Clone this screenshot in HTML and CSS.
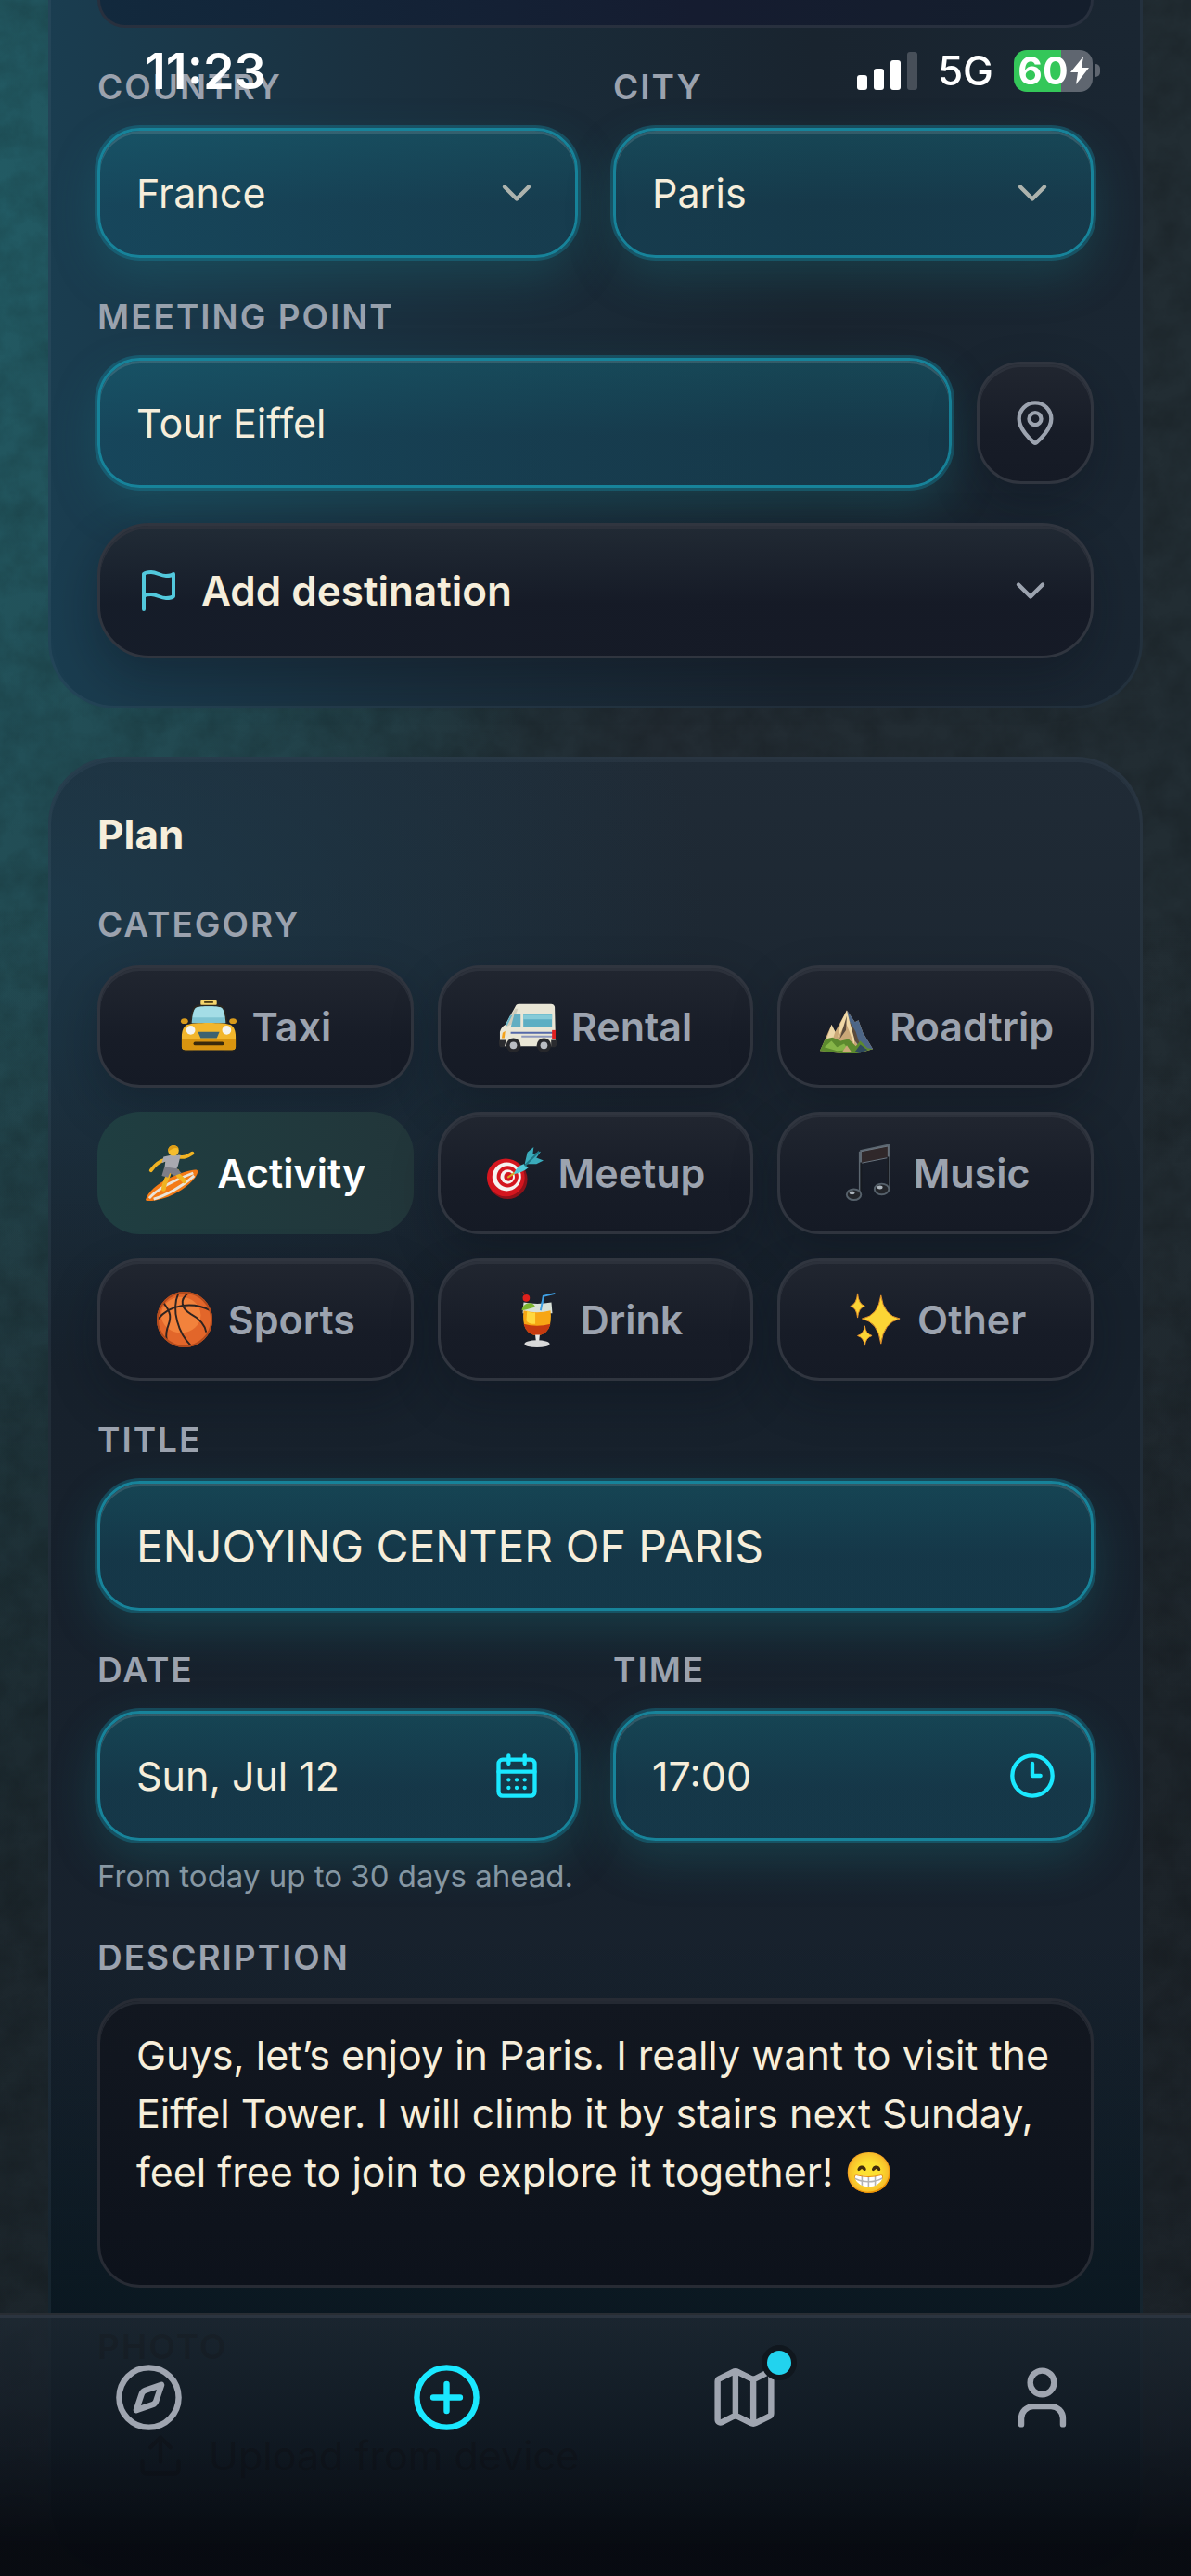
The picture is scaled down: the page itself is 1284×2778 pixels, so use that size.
FILE: index.html
```html
<!DOCTYPE html>
<html lang="en">

<head>
  <meta charset="UTF-8">
  <meta name="viewport" content="width=device-width, initial-scale=1.0">
  <title>New plan</title>
  <link rel="stylesheet" href="styles.css">
</head>
<body>
  <svg class="texture" aria-hidden="true">
    <filter id="grain">
      <feTurbulence type="fractalNoise" baseFrequency="0.03" numOctaves="5" seed="8"></feTurbulence>
      <feColorMatrix values="0 0 0 0 0  0 0 0 0 0  0 0 0 0 0  1.6 0 0 0 -0.5"></feColorMatrix>
    </filter>
    <rect width="100%" height="100%" filter="url(#grain)"></rect>
  </svg>

  <div class="status-bar">
    <span class="status-time">11:23</span>
    <div class="status-icons">
      <svg class="signal" viewBox="0 0 65 41" aria-hidden="true">
        <rect x="0" y="25" width="11" height="16" rx="3" fill="#fff"></rect>
        <rect x="18" y="18" width="11" height="23" rx="3" fill="#fff"></rect>
        <rect x="36" y="9" width="11" height="32" rx="3" fill="#fff"></rect>
        <rect x="54" y="0" width="11" height="41" rx="3" fill="#474f59"></rect>
      </svg>
      <span class="network">5G</span>
      <div class="battery">
        <span>60</span>
        <svg class="bolt" viewBox="0 0 20 30" aria-hidden="true"><path d="M14 0 0 17h8L6 30 20 12h-8z" fill="#fff"></path></svg>
      </div>
      <span class="battery-cap"></span>
    </div>
  </div>

  <main class="page">
    <section class="card card-location">
      <div class="cut-field"></div>
      <div class="form-row">
        <div class="form-group">
          <label for="country">Country</label>
          <div class="control">
            <select id="country" class="field filled"><option>France</option></select>
            <svg class="icon icon-muted" viewBox="0 0 24 24"><path d="m6 9 6 6 6-6"></path></svg>
          </div>
        </div>
        <div class="form-group">
          <label for="city">City</label>
          <div class="control">
            <select id="city" class="field filled"><option>Paris</option></select>
            <svg class="icon icon-muted" viewBox="0 0 24 24"><path d="m6 9 6 6 6-6"></path></svg>
          </div>
        </div>
      </div>
      <div class="form-group">
        <label for="meeting">Meeting point</label>
        <div class="meeting-row">
          <input type="text" id="meeting" class="field filled" value="Tour Eiffel">
          <button type="button" class="pin-btn" aria-label="Pick on map">
            <svg viewBox="0 0 24 24"><path d="M20 10c0 5-5.500 10.200-7.400 11.800a1 1 0 0 1-1.200 0C9.500 20.200 4 15 4 10a8 8 0 0 1 16 0"></path><circle cx="12" cy="10" r="3"></circle></svg>
          </button>
        </div>
      </div>
      <button type="button" class="wide-btn">
        <svg class="flag" viewBox="0 0 24 24"><path d="M4 15s1-1 4-1 5 2 8 2 4-1 4-1V3s-1 1-4 1-5-2-8-2-4 1-4 1zM4 22v-7"></path></svg>
        <span>Add destination</span>
        <svg class="chevron" viewBox="0 0 24 24"><path d="m6 9 6 6 6-6"></path></svg>
      </button>
    </section>

    <section class="card card-plan">
      <h2>Plan</h2>
      <div class="form-group">
        <span class="label" id="category-label">Category</span>
        <div class="chips" role="group" aria-labelledby="category-label">
          <button type="button" class="chip">
            <svg viewBox="0 0 64 64" aria-hidden="true">
              <rect x="3" y="52" width="12" height="9" rx="3" fill="#1d1f22"></rect>
              <rect x="49" y="52" width="12" height="9" rx="3" fill="#1d1f22"></rect>
              <path d="M11 30c1-12 2-18 6-21 6-3 24-3 30 0 4 3 5 9 6 21z" fill="#2b2620"></path>
              <path d="M13 28c1-10 2-15 5-17 5-2 23-2 28 0 3 2 4 7 5 17z" fill="#7fc4d2"></path>
              <path d="M14 22c1-6 2-10 4-11 5-2 23-2 28 0 2 1 3 5 4 11z" fill="#a4dde6"></path>
              <rect x="23" y="2" width="18" height="6" rx="1" fill="#f4d36b"></rect>
              <path d="M27 5h10" stroke="#4b3a12" stroke-width="2"></path>
              <ellipse cx="5" cy="26" rx="4" ry="3" fill="#d89a1c"></ellipse>
              <ellipse cx="59" cy="26" rx="4" ry="3" fill="#d89a1c"></ellipse>
              <path d="M8 30c6-3 42-3 48 0 4 2 6 7 6 13v11c0 3-1 4-4 4H6c-3 0-4-1-4-4V43c0-6 2-11 6-13z" fill="#f2b62c"></path>
              <path d="M2 46h60v8c0 3-1 4-4 4H6c-3 0-4-1-4-4z" fill="#d9940f"></path>
              <circle cx="12" cy="36" r="5" fill="#f4f4f0"></circle>
              <circle cx="52" cy="36" r="5" fill="#f4f4f0"></circle>
              <path d="M20 38h24l-3 7H23z" fill="#3d6270"></path>
              <rect x="15" y="49" width="34" height="4" rx="2" fill="#3a2a0c"></rect>
            </svg>
            Taxi
          </button>
          <button type="button" class="chip">
            <svg viewBox="0 0 64 64" aria-hidden="true">
              <path d="M18 10q1-3 4-3h36q3 0 4 3l1 40q0 4-4 4H4q-3 0-3-4V38q1-5 6-8z" fill="#e9e6d6"></path>
              <path d="M18 12 7 30l2 2 6-3 6-17z" fill="#cfccbb"></path>
              <path d="M12 20 7 31h2l6-12z" fill="#69b5c8"></path>
              <path d="M17 18h7v15H13z" fill="#62aec2"></path>
              <rect x="27" y="18" width="32" height="15" rx="1" fill="#5caec3"></rect>
              <path d="M27 19h32v5H27z" fill="#86cbd8"></path>
              <path d="M13 38h48v2H13z" fill="#5468a8"></path>
              <path d="M25 42h35v2H25z" fill="#8d97bd"></path>
              <rect x="59" y="36" width="4" height="10" fill="#e01f1f"></rect>
              <path d="m4 39 3-2-1 8H3z" fill="#f3a21b"></path>
              <path d="M0 47h8l-2 8H3q-3 0-3-4zM58 47h6v5q0 3-4 3h-2z" fill="#2a2b2f"></path>
              <circle cx="16" cy="53" r="8" fill="#26272b"></circle>
              <circle cx="16" cy="53" r="4" fill="#b9bcc2"></circle>
              <circle cx="50" cy="53" r="8" fill="#26272b"></circle>
              <circle cx="50" cy="53" r="4" fill="#b9bcc2"></circle>
            </svg>
            Rental
          </button>
          <button type="button" class="chip">
            <svg viewBox="0 0 64 64" aria-hidden="true">
              <path d="m3 59 13-29 4 8L33 14l9 13 4-2 5 14 11 18-17 5H27z" fill="#caa878"></path>
              <path d="m33 14 9 13 4-2 5 14 11 18-13 1-9-13-5-15z" fill="#4d6687"></path>
              <path d="m33 14 3 12 6 14-1 12-5-14-4-10-9 16 3-16z" fill="#f1d9a6"></path>
              <path d="m16 30-7 20 9-6 2-6z" fill="#ecd6a9"></path>
              <path d="M33 20 25 46l7-10zM36 26l6 22 6 6-5-16z" fill="#5b4b3c"></path>
              <path d="m3 59 6-13 8-2 9 4 9-2 8 8 5-6 8 8 6 1-17 5H27z" fill="#5c8a2e"></path>
              <path d="m8 55 8-7 6 7 8-4 5 7-13 1zM44 58l5-4 6 3z" fill="#86b548"></path>
              <path d="m28 60 5-7 5 7z" fill="#c9a878"></path>
              <path d="m42 60 6-8 8 6-9 4z" fill="#2f4a5c"></path>
            </svg>
            Roadtrip
          </button>
          <button type="button" class="chip selected" aria-pressed="true">
            <svg viewBox="0 0 64 64" aria-hidden="true">
              <path d="M1 62C4 50 22 38 44 31c10-3 16-4 15 0-2 10-22 25-38 29-10 3-19 4-20 2z" fill="#f47a16"></path>
              <path d="M5 60c8-9 25-19 49-28M10 61c13-4 32-14 45-26" fill="none" stroke="#e9e4d9" stroke-width="3"></path>
              <path d="M27 32c-2 8-6 10-6 18M36 30c-1 5 4 6 8 11" fill="none" stroke="#f0b323" stroke-width="5" stroke-linecap="round"></path>
              <path d="M24 17c-8 2-12 5-17 12M38 14c6 1 9 0 15-4" fill="none" stroke="#f0b323" stroke-width="4" stroke-linecap="round"></path>
              <path d="m21 14 8-2h11l-3 12-2 4-13-1 1-8-4 2z" fill="#a9a9b0"></path>
              <path d="m22 25 14 2 5 5-8 3-5-3-2 5-7-2z" fill="#7d7e87"></path>
              <circle cx="32" cy="7" r="6" fill="#f5bd2d"></circle>
              <path d="M26 8c-1-7 9-10 12-3-4-2-7 0-12 3z" fill="#dd9c16"></path>
            </svg>
            Activity
          </button>
          <button type="button" class="chip">
            <svg viewBox="0 0 64 64" aria-hidden="true">
              <circle cx="24" cy="39" r="22" fill="#8f1119"></circle>
              <circle cx="22" cy="37" r="21" fill="#d4161f"></circle>
              <circle cx="23" cy="36" r="16" fill="#f6f3f1"></circle>
              <circle cx="24" cy="36" r="12" fill="#d4161f"></circle>
              <circle cx="24" cy="36" r="8" fill="#f6f3f1"></circle>
              <circle cx="25" cy="36" r="5" fill="#d4161f"></circle>
              <path d="m24 37 12-8" stroke="#d8a91f" stroke-width="2"></path>
              <path d="M31 33q3-9 11-11l5 4q-7 6-16 7z" fill="#52c9d8"></path>
              <path d="M43 22 46 9l7-6-1 8 9-3-5 7 8 3-8 4H46z" fill="#3aabbb"></path>
              <path d="M43 24 59 8" stroke="#1f7887" stroke-width="2"></path>
            </svg>
            Meetup
          </button>
          <button type="button" class="chip">
            <svg viewBox="0 0 64 64" aria-hidden="true">
              <path d="M21 8 53 1v50M21 8v48" fill="none" stroke="#5b6670" stroke-width="3" stroke-linejoin="round"></path>
              <path d="m22 8 30-6v13l-30 6z" fill="#30282a" stroke="#6b7680" stroke-width="1"></path>
              <path d="M22 20v35M52 14v36" stroke="#171a20" stroke-width="2"></path>
              <ellipse cx="14" cy="56" rx="8" ry="6" fill="#23252a" stroke="#56616b" stroke-width="2"></ellipse>
              <ellipse cx="45" cy="50" rx="8" ry="6" fill="#23252a" stroke="#56616b" stroke-width="2"></ellipse>
              <ellipse cx="12" cy="54" rx="3" ry="2" fill="#aeb6be"></ellipse>
              <ellipse cx="43" cy="48" rx="3" ry="2" fill="#aeb6be"></ellipse>
            </svg>
            Music
          </button>
          <button type="button" class="chip">
            <svg viewBox="0 0 64 64" aria-hidden="true">
              <circle cx="32" cy="32" r="31" fill="#e2662a"></circle>
              <ellipse cx="28" cy="27" rx="22" ry="20" fill="#f2823c"></ellipse>
              <g fill="none" stroke="#2e2320" stroke-width="2">
                <path d="M2 32c14-18 40-20 59-10M25 3c-8 19 0 44 14 58M37 2c-12 8-8 18 2 24 10 5 16 13 17 20M9 14c8 10 8 16 5 24-3 8-3 11-2 16"></path>
                <circle cx="32" cy="32" r="30" stroke="#b24a1c"></circle>
              </g>
            </svg>
            Sports
          </button>
          <button type="button" class="chip">
            <svg viewBox="0 0 64 64" aria-hidden="true">
              <path d="M36 24 39 6l13-3" fill="none" stroke="#3fa0e4" stroke-width="2"></path>
              <path d="M17 13q15 3 31 0l1 12H16z" fill="#d8e0d8"></path>
              <path d="M36 22 38 12" stroke="#3fa0e4" stroke-width="2"></path>
              <path d="M17 22q15 4 30 0 3 26-15 28Q14 48 17 22z" fill="#f7a614"></path>
              <path d="M17 37q15 4 30 0-3 12-15 13-12-1-15-13z" fill="#c63a10"></path>
              <path d="M21 22q3 3 9 2v13q-8 0-10-4z" fill="#ffd83e"></path>
              <path d="M15 22c0-8 12-12 15-4l-10 3z" fill="#7cb52e"></path>
              <circle cx="20" cy="8" r="4" fill="#e0201c"></circle>
              <path d="m19 5-3-4" stroke="#8c2a1b" stroke-width="1"></path>
              <path d="M30 49h5l-1 9h-3z" fill="#e6e6e6"></path>
              <ellipse cx="32" cy="59" rx="14" ry="4" fill="#d9d9d9"></ellipse>
            </svg>
            Drink
          </button>
          <button type="button" class="chip">
            <svg viewBox="0 0 64 64" aria-hidden="true">
              <g fill="#fcd535" stroke="#e8932a" stroke-width="1">
                <path d="M40 5q3 23 21 26-18 4-21 28-3-24-21-28 18-3 21-26z"></path>
                <path d="M14 3q1 12 8 14-7 2-8 13-1-11-8-13 7-2 8-14z"></path>
                <path d="M22 39q1 9 8 11-7 2-8 11-1-9-8-11 7-2 8-11z"></path>
              </g>
            </svg>
            Other
          </button>
        </div>
      </div>

      <div class="form-group">
        <label for="title">Title</label>
        <input type="text" id="title" class="field filled title-field" value="ENJOYING CENTER OF PARIS">
      </div>

      <div class="date-block">
        <div class="form-row">
          <div class="form-group">
            <label for="date">Date</label>
            <div class="control">
              <input type="text" id="date" class="field filled" value="Sun, Jul 12">
              <svg class="icon icon-bright" viewBox="0 0 24 24">
                <rect x="3" y="4" width="18" height="18" rx="2"></rect>
                <path d="M8 2v4M16 2v4M3 10h18M8 14h.01M12 14h.01M16 14h.01M8 18h.01M12 18h.01M16 18h.01"></path>
              </svg>
            </div>
          </div>
          <div class="form-group">
            <label for="time">Time</label>
            <div class="control">
              <input type="text" id="time" class="field filled" value="17:00">
              <svg class="icon icon-bright" viewBox="0 0 24 24"><circle cx="12" cy="12" r="10"></circle><path d="M12 6v6h4"></path></svg>
            </div>
          </div>
        </div>
        <p class="hint">From today up to 30 days ahead.</p>
      </div>

      <div class="form-group">
        <label for="description">Description</label>
        <textarea id="description" class="field">Guys, let’s enjoy in Paris. I really want to visit the Eiffel Tower. I will climb it by stairs next Sunday, feel free to join to explore it together! 😁</textarea>
      </div>

      <div class="form-group photo">
        <span class="label">Photo</span>
        <button type="button" class="upload-btn">
          <svg viewBox="0 0 24 24"><path d="M12 15V3M7 8l5-5 5 5M3 15v4a2 2 0 0 0 2 2h14a2 2 0 0 0 2-2v-4"></path></svg>
          Upload from device
        </button>
      </div>
    </section>
  </main>

  <nav class="tab-bar">
    <a href="#explore" aria-label="Explore">
      <svg viewBox="0 0 24 24"><circle cx="12" cy="12" r="10"></circle><path d="m16.240 7.760-1.804 5.411a2 2 0 0 1-1.265 1.265L7.760 16.240l1.804-5.411a2 2 0 0 1 1.265-1.265z"></path></svg>
    </a>
    <a href="#create" class="active" aria-label="Create">
      <svg viewBox="0 0 24 24"><circle cx="12" cy="12" r="10"></circle><path d="M7.500 12h9M12 7.500v9"></path></svg>
    </a>
    <a href="#trips" aria-label="Trips">
      <svg viewBox="0 0 24 24"><path d="M14.106 5.553a2 2 0 0 0 1.788 0l3.659-1.830A1 1 0 0 1 21 4.619v12.764a1 1 0 0 1-.553.894l-4.553 2.277a2 2 0 0 1-1.788 0l-4.212-2.106a2 2 0 0 0-1.788 0l-3.659 1.830A1 1 0 0 1 3 19.381V6.618a1 1 0 0 1 .553-.894l4.553-2.277a2 2 0 0 1 1.788 0zM15 5.764v15M9 3.236v15"></path></svg>
      <span class="dot"></span>
    </a>
    <a href="#profile" aria-label="Profile">
      <svg viewBox="0 0 24 24"><path d="M19 21v-2a4 4 0 0 0-4-4H9a4 4 0 0 0-4 4v2"></path><circle cx="12" cy="7" r="4"></circle></svg>
    </a>
  </nav>
</body>

</html>
```
FILE: styles.css
```css
* {
  box-sizing: border-box;
}

body {
  margin: 0;
  font-family: Inter, "Noto Sans", sans-serif;
  font-size: 43px;
  color: #f6eedb;
  background: linear-gradient(180deg, rgba(0, 10, 14, 0) 50%, rgba(0, 10, 14, 0.5) 92%),
    linear-gradient(90deg, #22454c 0%, #222b32 55%, #222d33 100%);
  background-color: #1f2a30;
}

.texture {
  position: absolute;
  top: 0;
  left: 0;
  z-index: -1;
  width: 100%;
  height: 100%;
  background: radial-gradient(ellipse 50% 42% at 0% 8%, rgba(34, 100, 110, 0.7), rgba(34, 100, 110, 0)),
    linear-gradient(180deg, rgba(30, 36, 42, 0) 35%, rgba(30, 36, 42, 0.8) 75%);
}

.texture rect {
  opacity: 0.16;
}

button,
input,
select,
textarea {
  font-family: inherit;
  font-size: inherit;
  color: inherit;
  margin: 0;
}

svg {
  display: block;
  flex: none;
}

/* status bar */
.status-bar {
  position: fixed;
  top: 0;
  left: 0;
  right: 0;
  z-index: 20;
  display: flex;
  justify-content: space-between;
  padding: 46px 98px 0 156px;
  color: #fff;
}

.status-time {
  font-size: 54px;
  font-weight: 600;
  line-height: 62px;
}

.status-icons {
  display: flex;
  align-items: center;
  height: 60px;
}

.signal {
  width: 65px;
  height: 41px;
}

.network {
  margin: 0 22px 0 22px;
  font-size: 44px;
  font-weight: 500;
}

.battery {
  display: flex;
  align-items: center;
  justify-content: center;
  gap: 2px;
  width: 85px;
  height: 45px;
  border-radius: 14px;
  font-size: 41px;
  font-weight: 700;
  background: linear-gradient(90deg, #34c759 60%, #5f6670 60%);
}

.bolt {
  width: 20px;
  height: 30px;
}

.battery-cap {
  width: 5px;
  height: 14px;
  margin-left: 3px;
  border-radius: 0 6px 6px 0;
  background: #5f6670;
}

/* cards */
.page {
  display: flex;
  flex-direction: column;
  gap: 52px;
  padding: 0 52px;
}

.card {
  display: flex;
  flex-direction: column;
  gap: 38px;
  padding: 48px 50px 51px;
  border: 3px solid rgba(110, 130, 150, 0.12);
  border-radius: 72px;
  background-origin: border-box;
}

.card-location {
  padding-top: 0;
  border-top: 0;
  border-radius: 0 0 72px 72px;
  background-image: linear-gradient(90deg, #1a3d50 0%, #1a2d3b 38%, #19242f 70%, #1a2632 100%);
}

.card-plan {
  background-image: linear-gradient(180deg, rgba(5, 20, 28, 0) 65%, rgba(5, 20, 28, 0.8) 88%),
    radial-gradient(ellipse 60% 26% at 0% 8%, rgba(28, 66, 86, 0.6), rgba(28, 66, 86, 0)),
    linear-gradient(180deg, #202b36 0%, #17212c 30%, #18222e 100%);
  box-shadow: inset 0 3px 0 rgba(110, 130, 150, 0.1);
}

.cut-field {
  height: 30px;
  border: 3px solid #28303e;
  border-top: 0;
  border-radius: 0 0 48px 48px;
  background: linear-gradient(90deg, #12293d, #151c30 60%, #141e2c);
}

h2 {
  margin: 0;
  font-size: 44px;
  font-weight: 700;
  line-height: 66px;
}

.form-row {
  display: grid;
  grid-template-columns: 1fr 1fr;
  gap: 38px;
}

.form-group {
  display: flex;
  flex-direction: column;
  gap: 18px;
  min-width: 0;
}

label,
.label {
  font-size: 37px;
  font-weight: 600;
  line-height: 52px;
  letter-spacing: 2px;
  text-transform: uppercase;
  color: #9ba2ae;
}

.control {
  position: relative;
}

.field {
  display: block;
  width: 100%;
  height: 140px;
  padding: 0 39px;
  border: 3px solid #272b34;
  border-radius: 46px;
  outline: none;
  appearance: none;
}

.filled {
  border-color: #17839a;
  background: linear-gradient(180deg, rgba(20, 110, 130, 0.46), rgba(18, 85, 110, 0.42) 60%);
  background-clip: padding-box;
  box-shadow: 0 0 0 3px rgba(23, 131, 154, 0.4), inset 0 3px 0 rgba(255, 255, 255, 0.12),
    0 20px 50px rgba(24, 130, 140, 0.28);
}

.title-field {
  font-size: 48px;
}

/* icon laid over the right end of a field */
.icon {
  position: absolute;
  top: 44px;
  right: 40px;
  width: 52px;
  height: 52px;
  pointer-events: none;
}

.icon,
.pin-btn svg,
.wide-btn svg,
.upload-btn svg,
.tab-bar svg {
  fill: none;
  stroke: currentColor;
  stroke-width: 2;
  stroke-linecap: round;
  stroke-linejoin: round;
}

.icon-muted {
  color: #adb3ad;
}

.icon-bright {
  color: #1ae8ff;
}

.meeting-row {
  display: flex;
  align-items: center;
  gap: 27px;
}

.meeting-row .field {
  flex: 1;
  min-width: 0;
}

.pin-btn,
.wide-btn,
.chip {
  display: flex;
  align-items: center;
  border: 3px solid #30353f;
  background: linear-gradient(180deg, #212630 0%, #171c27 60%, #151a25 100%);
  box-shadow: inset 0 3px 0 #2c313b, 0 20px 50px rgba(10, 14, 22, 0.3);
}

.pin-btn {
  flex: none;
  justify-content: center;
  width: 126px;
  height: 132px;
  border-radius: 48px;
  color: #9ca3af;
}

.pin-btn svg {
  width: 52px;
  height: 52px;
}

.wide-btn {
  gap: 22px;
  width: 100%;
  height: 146px;
  padding: 0 39px;
  border-radius: 56px;
  font-size: 44px;
  font-weight: 600;
  background: linear-gradient(180deg, rgba(34, 42, 52, 0.9), rgba(21, 25, 37, 0.9) 60%);
}

.wide-btn span {
  flex: 1;
  text-align: left;
}

.wide-btn .flag {
  width: 48px;
  height: 48px;
  color: #52c8dc;
}

.wide-btn .chevron {
  width: 52px;
  height: 52px;
  color: #9ca3af;
}

.chips {
  display: grid;
  grid-template-columns: repeat(3, 1fr);
  gap: 26px;
}

.chip {
  justify-content: center;
  gap: 16px;
  height: 132px;
  padding: 0 12px;
  border-radius: 46px;
  font-weight: 600;
  color: #9ca3af;
}

.chip svg {
  width: 62px;
  height: 62px;
}

.chip.selected {
  border-color: transparent;
  color: #fff;
  background: linear-gradient(90deg, #1f3e41, #22363a);
  background-clip: border-box;
  background-origin: border-box;
  box-shadow: none;
}

.date-block {
  display: flex;
  flex-direction: column;
  gap: 14px;
}

.hint {
  margin: 0;
  font-size: 33px;
  line-height: 48px;
  color: #8d99a5;
}

textarea.field {
  height: 312px;
  padding: 27px 39px;
  line-height: 63px;
  resize: none;
  background: linear-gradient(180deg, #121720, #0d121b);
  box-shadow: inset 0 3px 0 #242932;
}

/* upload area, mostly hidden behind the tab bar */
.photo .label,
.upload-btn {
  color: #000;
}

.upload-btn {
  display: flex;
  align-items: center;
  gap: 26px;
  width: 100%;
  height: 146px;
  padding: 0 42px;
  border: 0;
  background: none;
}

.upload-btn svg {
  width: 52px;
  height: 52px;
}

/* bottom navigation */
.tab-bar {
  position: fixed;
  left: 0;
  right: 0;
  bottom: 0;
  z-index: 10;
  display: grid;
  grid-template-columns: repeat(4, 1fr);
  align-items: start;
  height: 284px;
  padding-top: 50px;
  border-top: 3px solid #282d33;
  background: linear-gradient(180deg, rgba(31, 42, 52, 0.8) 0%, rgba(18, 25, 34, 0.8) 50%, rgba(8, 11, 17, 0.96) 88%);
  box-shadow: inset 0 3px 0 #2b343f;
}

.tab-bar a {
  position: relative;
  justify-self: center;
  color: #9fa5b0;
}

.tab-bar a.active {
  color: #1ae8ff;
}

.tab-bar svg {
  width: 77px;
  height: 77px;
}

.dot {
  position: absolute;
  top: -18px;
  right: -18px;
  width: 38px;
  height: 38px;
  border: 6px solid #10171e;
  border-radius: 50%;
  background: #22d3ee;
}
```
